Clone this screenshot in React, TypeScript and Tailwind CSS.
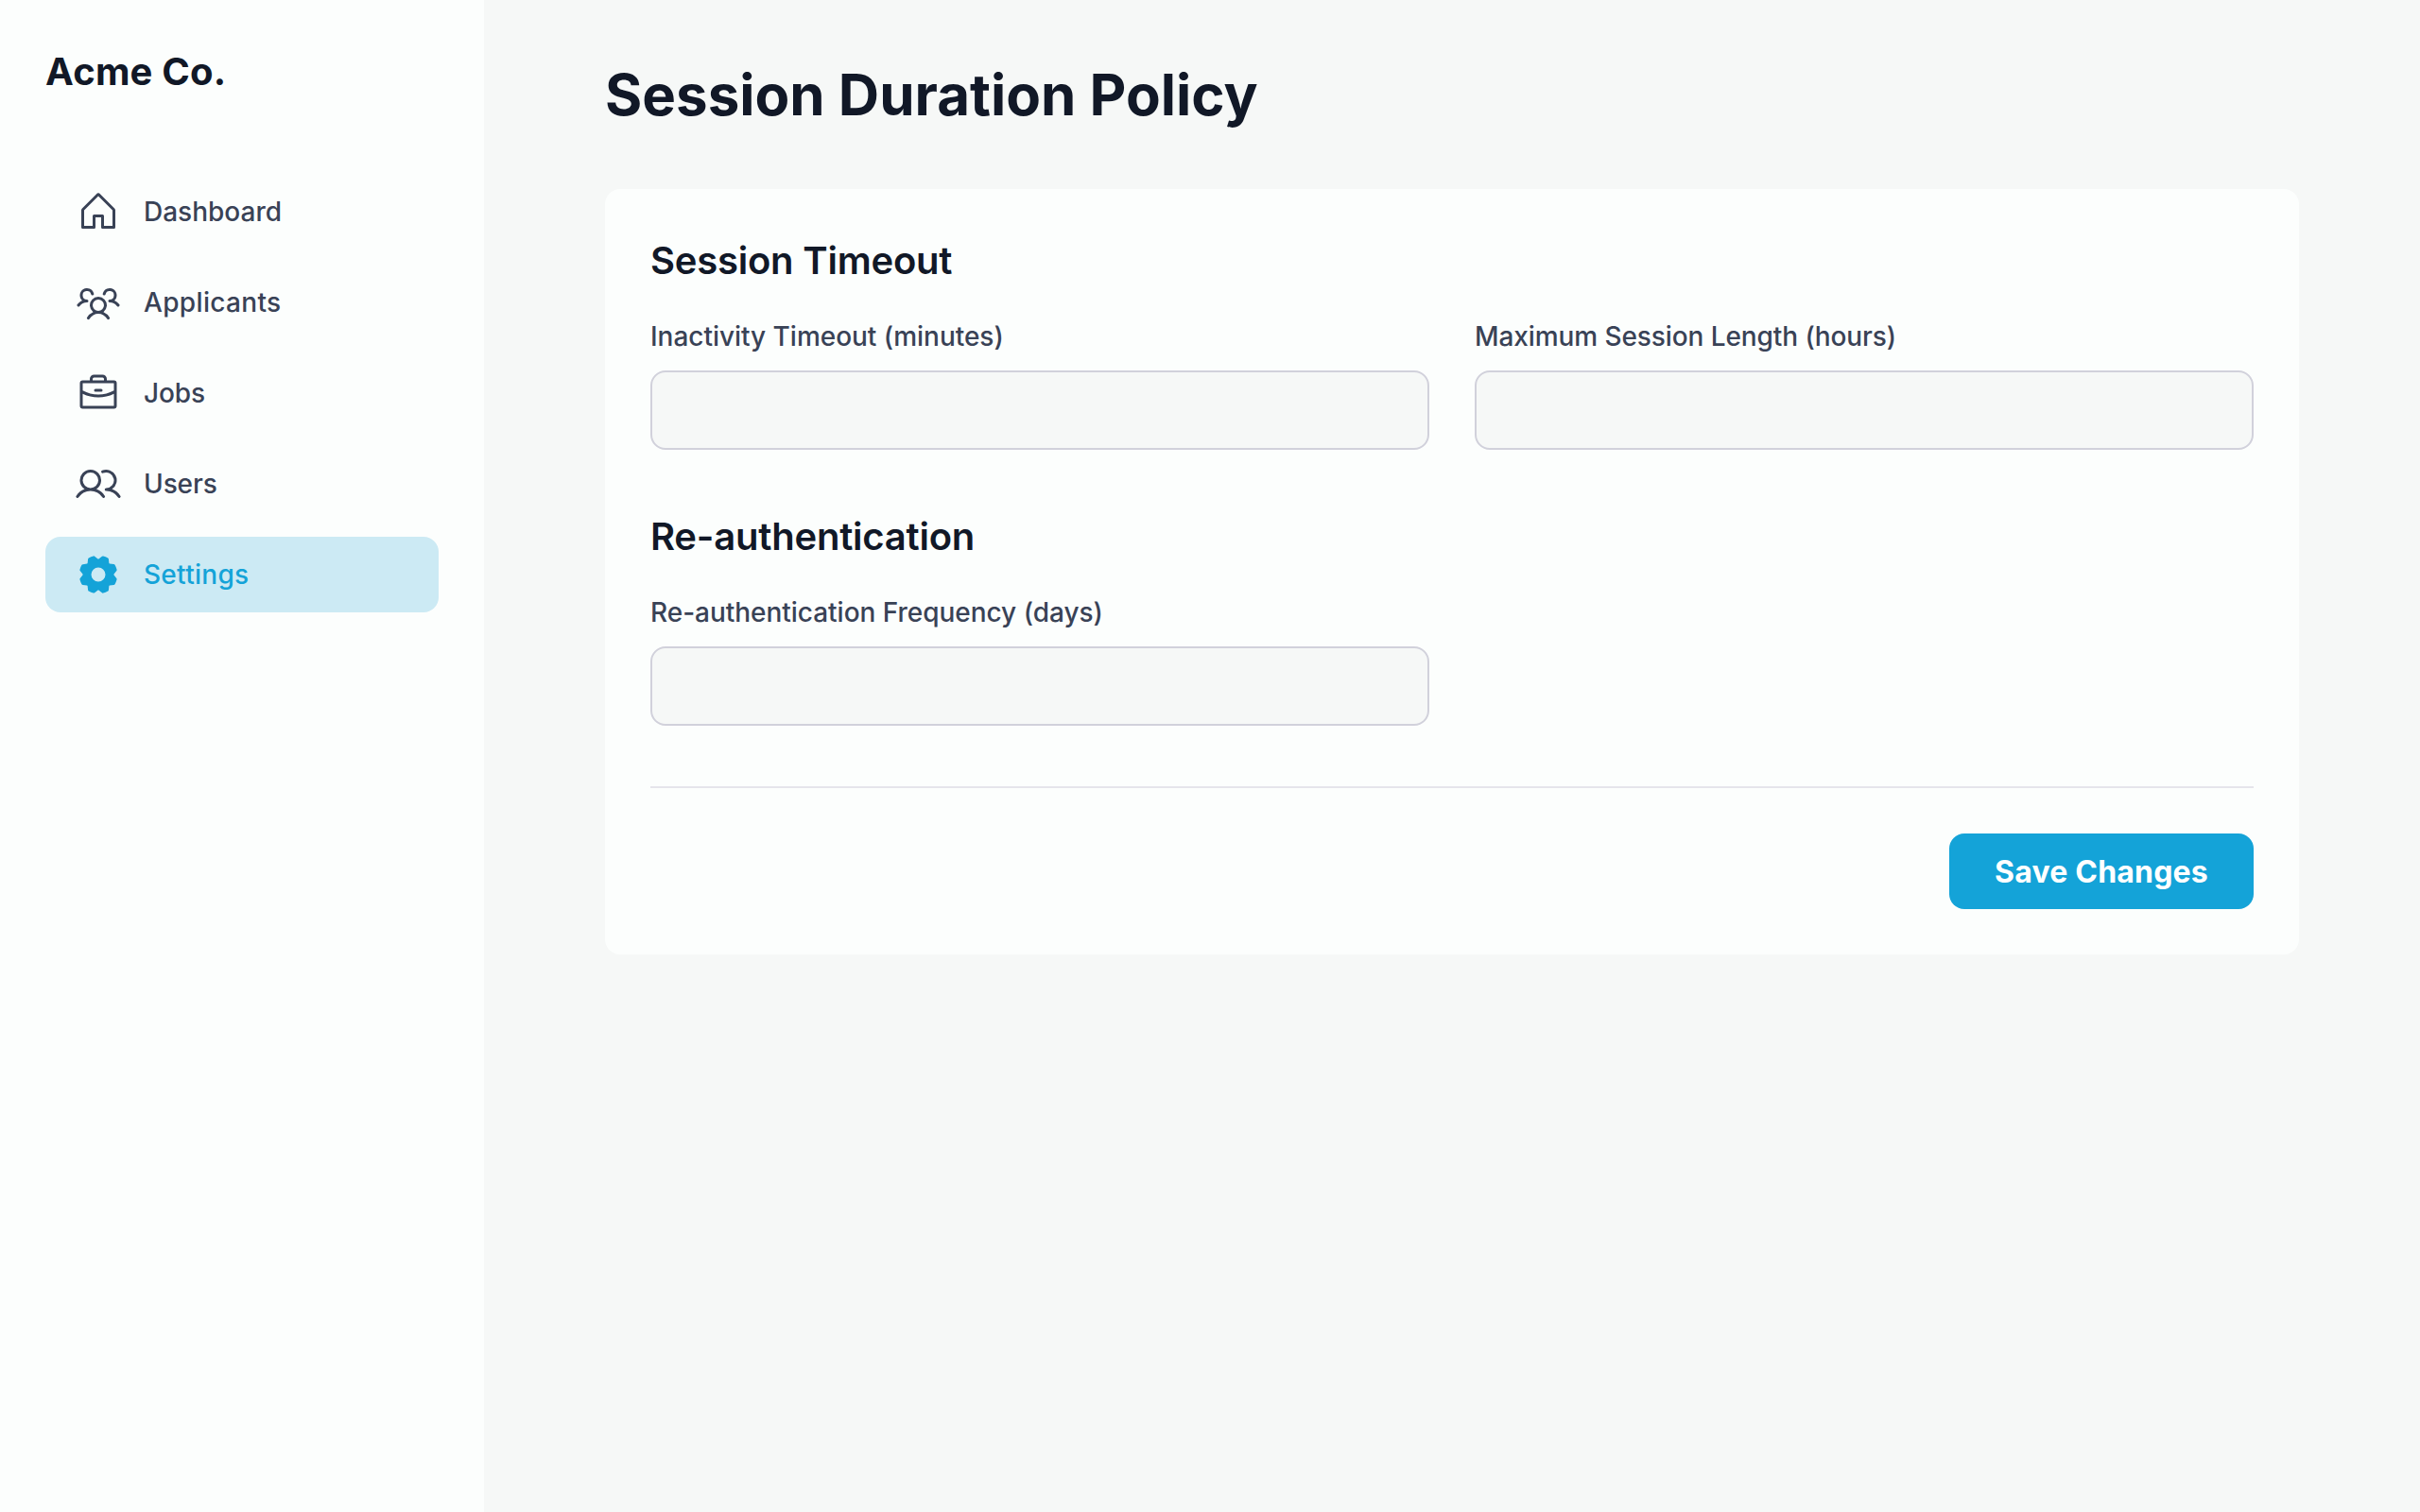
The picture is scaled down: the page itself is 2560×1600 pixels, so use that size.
import { useId } from "react";
import type { IconType } from "react-icons";
import { PiBriefcase, PiGearFill, PiHouse, PiUsers, PiUsersThree } from "react-icons/pi";

const navItems: { label: string; icon: IconType; tracking: string; active?: boolean }[] = [
  { label: "Dashboard", icon: PiHouse, tracking: "tracking-normal" },
  { label: "Applicants", icon: PiUsersThree, tracking: "tracking-[0.34px]" },
  { label: "Jobs", icon: PiBriefcase, tracking: "tracking-[-0.1px]" },
  { label: "Users", icon: PiUsers, tracking: "tracking-[-0.1px]" },
  { label: "Settings", icon: PiGearFill, tracking: "tracking-[0.28px]", active: true },
];

function Sidebar() {
  return (
    <aside className="flex w-[512px] shrink-0 flex-col bg-[#fcfefd] p-12">
      <div className="mb-20 text-[40px] leading-14 font-bold tracking-[0.2px] text-[#111827]">Acme Co.</div>
      <nav className="flex flex-col gap-4">
        {navItems.map(({ label, icon: Icon, tracking, active }) => (
          <a
            key={label}
            href="#"
            className={
              "flex h-20 items-center gap-6 rounded-2xl px-8 text-[28px] leading-10 font-medium " +
              tracking +
              (active ? " bg-[#cceaf4] text-[#14a3d8]" : " text-[#394256]")
            }
          >
            <Icon className="size-12 shrink-0" />
            {label}
          </a>
        ))}
      </nav>
    </aside>
  );
}

function SectionTitle({ children }: { children: string }) {
  return (
    <h2 className="mb-8 text-[40px] leading-14 font-semibold tracking-[-0.22px] text-[#111827]">{children}</h2>
  );
}

function Field({ label, tracking }: { label: string; tracking: string }) {
  const id = useId();
  return (
    <div className="flex flex-col gap-4">
      <label htmlFor={id} className={"text-[28px] leading-10 font-medium text-[#394256] " + tracking}>
        {label}
      </label>
      <input
        id={id}
        type="text"
        className="h-[84px] w-full rounded-2xl border-2 border-[#d1d1db] bg-[#f6f8f7] px-6 text-[28px] outline-none"
      />
    </div>
  );
}

export default function App() {
  return (
    <div className="flex min-h-screen bg-[#f6f8f7] font-['Inter',sans-serif]">
      <Sidebar />
      <main className="flex-1 px-32 py-16">
        <h1 className="mb-16 text-[60px] leading-[72px] font-bold text-[#111827]">Session Duration Policy</h1>
        <form className="rounded-2xl bg-[#fcfefd] p-12">
          <section>
            <SectionTitle>Session Timeout</SectionTitle>
            <div className="grid grid-cols-2 gap-12">
              <Field label="Inactivity Timeout (minutes)" tracking="tracking-[-0.03px]" />
              <Field label="Maximum Session Length (hours)" tracking="tracking-[-0.09px]" />
            </div>
          </section>
          <section className="mt-16">
            <SectionTitle>Re-authentication</SectionTitle>
            <div className="grid grid-cols-2 gap-12">
              <Field label="Re-authentication Frequency (days)" tracking="tracking-[-0.03px]" />
            </div>
          </section>
          <div className="mt-16 flex justify-end border-t-2 border-[#e5e5eb] pt-12">
            <button
              type="button"
              className="h-20 w-[322px] rounded-2xl bg-[#14a3d8] pt-0.5 text-[32px] leading-12 font-bold tracking-[0.2px] text-white"
            >
              Save Changes
            </button>
          </div>
        </form>
      </main>
    </div>
  );
}
